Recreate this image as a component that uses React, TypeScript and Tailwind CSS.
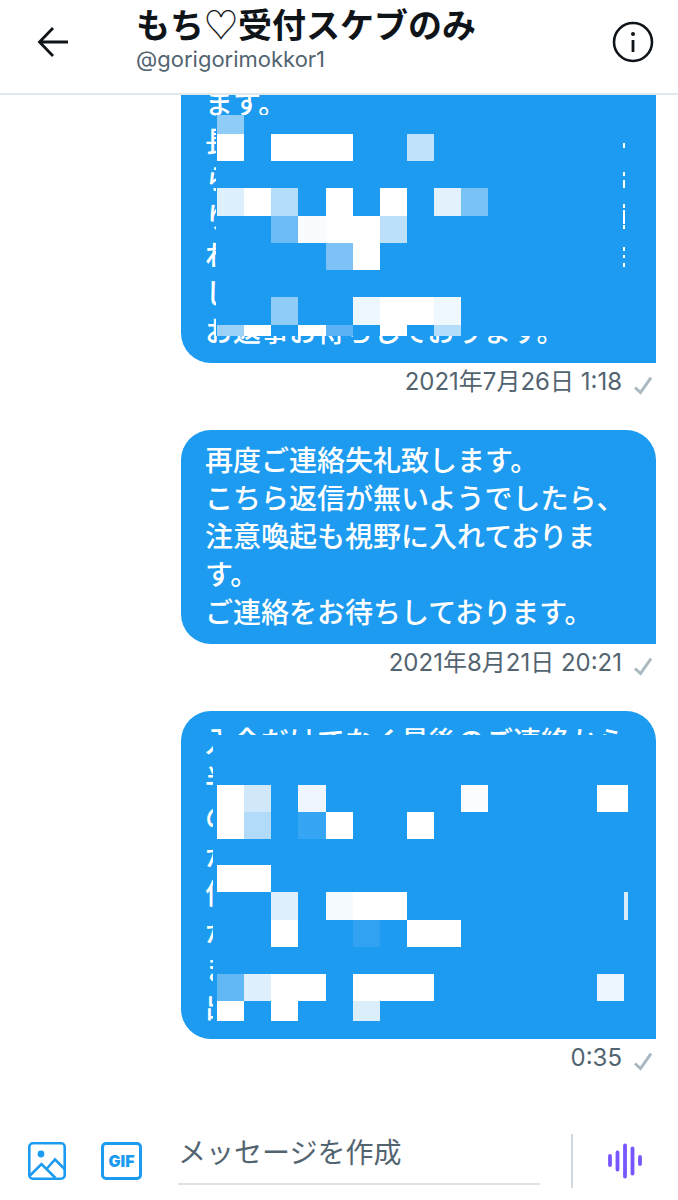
import { ReactNode } from 'react';

type Cell = [col: number, row: number, span: number, fill: string];

interface MosaicProps {
  left: number;
  right: number;
  rows: number[];
  cells: Cell[];
  children?: ReactNode;
}

interface MessageProps {
  time: string;
  shape: string;
  children: ReactNode;
}

const COL_START = 36;
const COL_WIDTH = 27.13;

const colX = (col: number) => COL_START + Math.round(col * COL_WIDTH);

// Pixelated cover hiding the private part of a message
function Mosaic({ left, right, rows, cells, children }: MosaicProps) {
  const top = rows[0];
  const bottom = rows[rows.length - 1];

  return (
    <svg
      className="absolute left-0 top-0 h-full w-[475px]"
      shapeRendering="crispEdges"
      aria-hidden="true"
    >
      <rect x={left} y={top} width={right - left} height={bottom - top} fill="#1d9bf0" />
      {cells.map(([col, row, span, fill]) => (
        <rect
          key={`${col}-${row}`}
          x={colX(col)}
          y={rows[row]}
          width={colX(col + span) - colX(col)}
          height={rows[row + 1] - rows[row]}
          fill={fill}
        />
      ))}
      {children}
    </svg>
  );
}

const firstRows = [42, 61, 88, 115, 143, 170, 197, 224, 252, 263];
const firstCells: Cell[] = [
  [0, 0, 1, '#8fccf7'],
  [0, 1, 1, '#fff'],
  [2, 1, 3, '#fff'],
  [7, 1, 1, '#c0e2fb'],
  [0, 3, 1, '#ddf0fe'],
  [1, 3, 1, '#fff'],
  [2, 3, 1, '#b4dcfb'],
  [4, 3, 1, '#fff'],
  [6, 3, 1, '#fff'],
  [8, 3, 1, '#e2f1fc'],
  [9, 3, 1, '#79c2f6'],
  [2, 4, 1, '#6dbbf5'],
  [3, 4, 1, '#f8fcff'],
  [4, 4, 2, '#fff'],
  [6, 4, 1, '#bce0f9'],
  [4, 5, 1, '#7cc2f6'],
  [5, 5, 1, '#fff'],
  [2, 7, 1, '#8fccf7'],
  [5, 7, 1, '#ecf7ff'],
  [6, 7, 2, '#fff'],
  [8, 7, 1, '#f0f8ff'],
  [0, 8, 1, '#9dd2f8'],
  [1, 8, 1, '#fff'],
  [3, 8, 1, '#fff'],
  [4, 8, 1, '#5ab3f4'],
  [6, 8, 1, '#fff'],
  [8, 8, 1, '#b4dcfb'],
];

const lastRows = [24, 74, 101, 128, 154, 181, 209, 236, 263, 290, 310];
const lastCells: Cell[] = [
  [0, 1, 1, '#fff'],
  [1, 1, 1, '#d1e8fb'],
  [3, 1, 1, '#eff6ff'],
  [9, 1, 1, '#fbfcff'],
  [0, 2, 1, '#fff'],
  [1, 2, 1, '#b1dbf9'],
  [3, 2, 1, '#36a5f3'],
  [4, 2, 1, '#fff'],
  [7, 2, 1, '#fff'],
  [0, 4, 2, '#fff'],
  [2, 5, 1, '#dfeffc'],
  [4, 5, 1, '#f5faff'],
  [5, 5, 2, '#fff'],
  [2, 6, 1, '#fff'],
  [5, 6, 1, '#31a2f2'],
  [7, 6, 2, '#fff'],
  [0, 8, 1, '#62b8f5'],
  [1, 8, 1, '#dfeffc'],
  [2, 8, 2, '#fff'],
  [5, 8, 3, '#fff'],
  [14, 8, 1, '#ebf5fe'],
  [0, 9, 1, '#fff'],
  [2, 9, 1, '#fff'],
  [5, 9, 1, '#dbeefc'],
];

function Message({ time, shape, children }: MessageProps) {
  return (
    <li className="flex shrink-0 flex-col items-end">
      <div
        className={`relative w-[475px] max-w-full bg-[#1d9bf0] px-6 py-3 text-[28px] font-medium leading-[38px] text-white ${shape}`}
      >
        {children}
      </div>
      <div className="flex h-[38px] items-center gap-3 pr-1 text-2xl text-[#536471]">
        <time>{time}</time>
        <svg className="mt-2 h-5 w-[18px]" viewBox="0 0 18 20" fill="none" aria-label="送信済み">
          <path d="M1 11.5 6.5 16.5 17 1.5" stroke="#aab8c2" strokeWidth="3" />
        </svg>
      </div>
    </li>
  );
}

function Header() {
  return (
    <header className="flex h-[95px] shrink-0 items-start border-b-2 border-[#e1e8ed] pl-[37px] pr-6">
      <button type="button" aria-label="戻る" className="mt-[26px]">
        <svg className="h-8 w-8" viewBox="0 0 32 32" fill="none" stroke="#0f1419" strokeWidth="2.8">
          <path d="M31 16H3M16 2 2.5 16 16 30" />
        </svg>
      </button>
      <div className="ml-[67px] min-w-0 flex-1">
        <h1 className="pt-0.5 font-['Noto_Sans_CJK_JP',sans-serif] text-[34px] font-bold leading-[44px] text-[#0f1419]">
          もち<span className="font-normal">♡</span>受付スケブのみ
        </h1>
        <p className="text-[22px] leading-[26px] text-[#536471]">@gorigorimokkor1</p>
      </div>
      <button type="button" aria-label="会話情報" className="mt-[21px]">
        <svg className="h-[42px] w-[42px]" viewBox="0 0 42 42" fill="none" stroke="#0f1419">
          <circle cx="21" cy="21" r="19" strokeWidth="2.6" />
          <path d="M21 19v12" strokeWidth="2.8" />
          <circle cx="21" cy="13" r="2" fill="#0f1419" stroke="none" />
        </svg>
      </button>
    </header>
  );
}

function Composer() {
  return (
    <form className="flex h-[93px] shrink-0 items-center pl-7 pr-9" onSubmit={(e) => e.preventDefault()}>
      <button type="button" aria-label="画像を追加" className="mt-[15px]">
        <svg className="h-[38px] w-[38px]" viewBox="0 0 38 38" fill="none" stroke="#1d9bf0" strokeWidth="2.6">
          <rect x="1.3" y="1.3" width="35.4" height="35.4" rx="3.5" />
          <path d="M1.5 34 13.5 22 27.5 36M19 26.5 27 17.5 36.5 27" />
          <circle cx="13" cy="12" r="3.4" fill="#1d9bf0" stroke="none" />
        </svg>
      </button>
      <button
        type="button"
        aria-label="GIFを追加"
        className="ml-[35px] mt-[15px] flex h-[38px] w-[41px] items-center justify-center rounded-[5px] border-3 border-[#1d9bf0] text-base font-black text-[#1d9bf0]"
      >
        GIF
      </button>
      <input
        type="text"
        aria-label="メッセージを作成"
        placeholder="メッセージを作成"
        className="ml-9 h-[62px] min-w-0 flex-1 border-b-2 border-[#dbe3e8] text-[28px] text-[#0f1419] outline-none placeholder:text-[#536471]"
      />
      <div className="ml-[31px] mt-[15px] h-[54px] w-0.5 bg-[#cfd9de]" />
      <button type="button" aria-label="音声メッセージ" className="ml-[35px] mt-[15px]">
        <svg
          className="h-9 w-[34px]"
          viewBox="0 0 34 36"
          stroke="#7856ff"
          strokeWidth="3.8"
          strokeLinecap="round"
        >
          <path d="M2 13v9M9.500 9.500v17M17 2.500v31M24.500 5.500v25M32 14v7" />
        </svg>
      </button>
    </form>
  );
}

export default function App() {
  return (
    <div className="flex h-screen flex-col overflow-hidden bg-white font-[Inter,'Noto_Sans_CJK_JP',sans-serif]">
      <Header />
      <main className="flex min-h-0 flex-1 flex-col justify-end overflow-hidden">
        <ul className="flex flex-col gap-[29px] px-[22px] pb-[30px]">
          <Message time="2021年7月26日 1:18" shape="rounded-bl-[30px]">
            ます。
            <br />
            長
            <br />
            ら
            <br />
            り
            <br />
            れ
            <br />
            し
            <br />
            お返事お待ちしております。
            <Mosaic left={35} right={442} rows={firstRows} cells={firstCells}>
              <path
                d="M443 70v5M443 99v4M443 107v8M443 131v4M443 137v14M443 152v4M443 174v4M443 182v3M443 190v4"
                stroke="#fff"
                strokeWidth="2"
              />
            </Mosaic>
          </Message>
          <Message time="2021年8月21日 20:21" shape="rounded-[30px] rounded-br-none">
            再度ご連絡失礼致します。
            <br />
            こちら返信が無いようでしたら、
            <br />
            注意喚起も視野に入れております。
            <br />
            ご連絡をお待ちしております。
          </Message>
          <Message time="0:35" shape="rounded-[30px] rounded-br-none">
            入金だけでなく最後のご連絡から
            <br />
            半
            <br />
            の
            <br />
            か
            <br />
            何
            <br />
            か
            <br />
            ま
            <br />
            出
            <Mosaic left={32} right={447} rows={lastRows} cells={lastCells}>
              <rect x="416" y="74" width="31" height="27" fill="#fff" />
              <rect x="443" y="181" width="4" height="28" fill="#d8edfc" />
            </Mosaic>
          </Message>
        </ul>
      </main>
      <Composer />
    </div>
  );
}
